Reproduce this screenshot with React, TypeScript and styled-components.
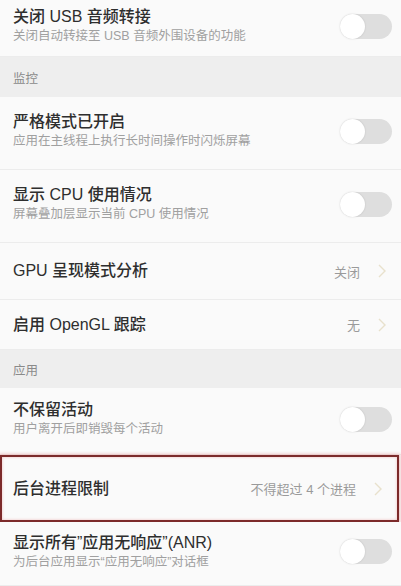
import styled, { createGlobalStyle } from "styled-components";

const GlobalStyle = createGlobalStyle`
  html, body {
    margin: 0;
    padding: 0;
    background: #f8f8f8;
    font-family: "Liberation Sans", "Noto Sans CJK SC", sans-serif;
  }
`;

type Item =
  | { kind: "header"; title: string; height: number }
  | { kind: "switch"; title: string; desc: string; height: number }
  | { kind: "value"; title: string; value: string; height: number; marked?: boolean };

const items: Item[] = [
  { kind: "switch", title: "关闭 USB 音频转接", desc: "关闭自动转接至 USB 音频外围设备的功能", height: 57 },
  { kind: "header", title: "监控", height: 40 },
  { kind: "switch", title: "严格模式已开启", desc: "应用在主线程上执行长时间操作时闪烁屏幕", height: 73 },
  { kind: "switch", title: "显示 CPU 使用情况", desc: "屏幕叠加层显示当前 CPU 使用情况", height: 73 },
  { kind: "value", title: "GPU 呈现模式分析", value: "关闭", height: 57 },
  { kind: "value", title: "启用 OpenGL 跟踪", value: "无", height: 50 },
  { kind: "header", title: "应用", height: 38 },
  { kind: "switch", title: "不保留活动", desc: "用户离开后即销毁每个活动", height: 67 },
  { kind: "value", title: "后台进程限制", value: "不得超过 4 个进程", height: 67, marked: true },
  { kind: "switch", title: "显示所有\u201d应用无响应\u201d(ANR)", desc: "为后台应用显示\u201c应用无响应\u201d对话框", height: 64 },
];

const Chevron = () => (
  <svg width="8" height="14" viewBox="0 0 8 14">
    <polyline points="1,1 7,7 1,13" fill="none" stroke="#e8e1cc" strokeWidth="1.4" />
  </svg>
);

const App = () => {
  return (
    <Page>
      <GlobalStyle />
      {items.map((item, i) => {
        if (item.kind === "header") {
          return (
            <SectionHeader key={i} $height={item.height}>
              {item.title}
            </SectionHeader>
          );
        }
        if (item.kind === "switch") {
          return (
            <Row key={i} $height={item.height}>
              <TextWrap>
                <Title>{item.title}</Title>
                <Desc>{item.desc}</Desc>
              </TextWrap>
              <Toggle>
                <Knob />
              </Toggle>
            </Row>
          );
        }
        return (
          <Row key={i} $height={item.height} $marked={item.marked}>
            <Title>{item.title}</Title>
            <ValueWrap>
              <Value>{item.value}</Value>
              <Chevron />
            </ValueWrap>
          </Row>
        );
      })}
    </Page>
  );
};

const Page = styled.div`
  width: 401px;
  height: 586px;
  overflow: hidden;
  background: #f9f9f9;
`;

const SectionHeader = styled.div<{ $height: number }>`
  height: ${(p) => p.$height}px;
  box-sizing: border-box;
  display: flex;
  align-items: center;
  padding-left: 13px;
  background: #eeeeee;
  color: #8a8a8a;
  font-size: 12.5px;
`;

const Row = styled.div<{ $height: number; $marked?: boolean }>`
  height: ${(p) => p.$height}px;
  box-sizing: border-box;
  display: flex;
  align-items: center;
  justify-content: space-between;
  padding: 0 9px 0 13px;
  background: #fafafa;
  border-bottom: 1px solid #ececec;
  border: ${(p) => (p.$marked ? "2px solid #7c2a2a" : undefined)};
  box-shadow: ${(p) =>
    p.$marked ? "0 0 3px 1px rgba(230, 150, 150, 0.6), inset 0 0 3px rgba(230, 150, 150, 0.6)" : "none"};
  margin-right: ${(p) => (p.$marked ? "2px" : "0")};
  padding-left: ${(p) => (p.$marked ? "11px" : "13px")};
`;

const TextWrap = styled.div`
  display: flex;
  flex-direction: column;
  margin-top: -4px;
`;

const Title = styled.div`
  font-size: 16px;
  line-height: 20px;
  font-weight: 500;
  color: #2e2e2e;
`;

const Desc = styled.div`
  margin-top: 1px;
  font-size: 12.5px;
  line-height: 17px;
  color: #a0a0a0;
`;

const Toggle = styled.div`
  width: 52px;
  height: 25px;
  border-radius: 13px;
  background: #dedede;
  display: flex;
  align-items: center;
  margin-top: -4px;
`;

const Knob = styled.div`
  width: 25px;
  height: 25px;
  border-radius: 50%;
  background: #ffffff;
  box-shadow: 0 0 2px rgba(0, 0, 0, 0.15);
`;

const ValueWrap = styled.div`
  display: flex;
  align-items: center;
  gap: 18px;
  padding-right: 6px;
`;

const Value = styled.span`
  font-size: 13px;
  color: #9a9a9a;
`;

export default App;
